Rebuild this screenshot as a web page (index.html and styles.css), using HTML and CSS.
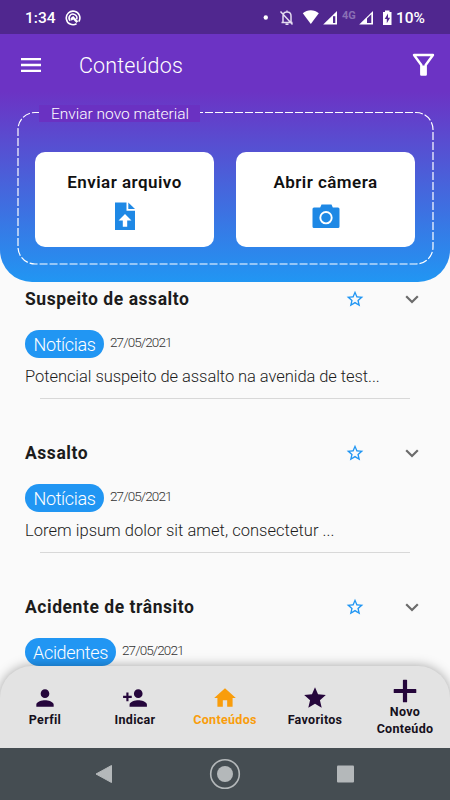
FILE: index.html
```html
<!DOCTYPE html>
<html lang="pt-BR">
<head>
    <meta charset="UTF-8">
    <meta name="viewport" content="width=device-width, initial-scale=1.0">
    <title>Conteúdos</title>
    <link rel="stylesheet" href="styles.css">
</head>
<body>
    <div class="status-bar">
        <span class="time">1:34</span>
        <svg class="app-icon" width="16" height="16" viewBox="0 0 16 16">
            <path d="M11.500 13.800A6.800 6.800 0 1 1 13.800 11.600" fill="none" stroke="#fff" stroke-width="1.600"/>
            <path d="M5.200 10.800A3.900 3.900 0 1 1 11.700 9.200" fill="none" stroke="#fff" stroke-width="1.500"/>
            <path d="M5.500 8.200L8.200 6l5 5.200-1.700 1.800-3.300-3.400-1.700 1.200z" fill="#fff"/>
        </svg>
        <svg class="status-icons" width="132" height="18" viewBox="262 8 132 18">
            <circle cx="265.800" cy="16.500" r="2.200" fill="#fff"/>
            <path d="M281.500 21.500h11M283 21v-6c0-2.500 1.500-4 4-4s4 1.500 4 4v6M287 9.500v2M285.500 23.200h3M280.500 10.500l12 13" fill="none" stroke="#e4dcf0" stroke-width="1.500"/>
            <path d="M302.800 12.200c4.500-4 11.500-4 16 0L310.800 23z" fill="#fff"/>
            <path d="M323.200 23.500L337 10v13.500z" fill="#fff"/>
            <path d="M333 15.200h2.300v6.800H333z" fill="#50278f"/>
            <text class="network" x="342" y="18">4G</text>
            <path d="M359.200 23.500L373 10v13.500z" fill="#fff"/>
            <path d="M367 17.500l4.300-4.200v8.700H367z" fill="#50278f"/>
            <path d="M385 9.500h4.500v1.500h2v13h-8.500V11h2z" fill="#fff"/>
            <path d="M388 12.500l-3.300 5.600h2.100v4.200l3.300-5.600H388z" fill="#50278f"/>
        </svg>
        <span class="battery">10%</span>
    </div>

    <header>
        <div class="toolbar">
            <svg width="20" height="14" viewBox="0 0 20 14">
                <path d="M0 1.200h20M0 7h20M0 12.800h20" stroke="#fff" stroke-width="2.300"/>
            </svg>
            <h1>Conteúdos</h1>
            <svg class="filter" width="23" height="24" viewBox="0 0 23 24">
                <path d="M2 2h19l-7.300 10v9.500H9.300V12z" fill="none" stroke="#fff" stroke-width="2.400" stroke-linejoin="round"/>
                <path d="M9.300 12.500h4.400v9H9.300z" fill="#fff"/>
            </svg>
        </div>
        <div class="upload">
            <svg class="dashes" width="418" height="155" viewBox="0 0 418 155">
                <rect x="1" y="1.500" width="415" height="151.500" rx="17" fill="none" stroke="#fff" stroke-width="1.200" stroke-dasharray="8 2"/>
            </svg>
            <span class="legend">Enviar novo material</span>
            <div class="cards">
                <div class="card">
                    <span class="send">Enviar arquivo</span>
                    <svg width="22" height="28" viewBox="0 0 22 28">
                        <path d="M1 .5h11.500v8.300H21V28H1z" fill="#1e88e5"/>
                        <path d="M14.300.5l6.700 6.600h-6.700z" fill="#1e88e5"/>
                        <path d="M11 12l6.500 6.500h-4.300v6.200H8.800v-6.200H4.500z" fill="#fff"/>
                    </svg>
                </div>
                <div class="card">
                    <span class="camera">Abrir câmera</span>
                    <svg width="28" height="28" viewBox="0 0 28 28">
                        <path d="M2 5.500h6.200L9.500 2.500h10l1.300 3H26a1.500 1.500 0 0 1 1.500 1.500v17.500a1.500 1.500 0 0 1-1.500 1.500H2A1.500 1.500 0 0 1 .5 24.500V7A1.500 1.500 0 0 1 2 5.500z" fill="#1e88e5"/>
                        <circle cx="14" cy="15.700" r="5.700" fill="none" stroke="#fff" stroke-width="1.900"/>
                    </svg>
                </div>
            </div>
        </div>
    </header>

    <main>
        <article class="item">
            <div class="item-head">
                <h2>Suspeito de assalto</h2>
                <svg class="star" width="20" height="20" viewBox="0 0 24 24"><path d="M22 9.240l-7.190-.620L12 2 9.190 8.630 2 9.240l5.460 4.730L5.820 21 12 17.270 18.180 21l-1.630-7.030L22 9.240zM12 15.400l-3.760 2.270 1-4.280-3.320-2.880 4.380-.380L12 6.100l1.710 4.040 4.380.380-3.320 2.880 1 4.280L12 15.400z"/></svg>
                <svg class="chevron" width="14" height="9" viewBox="0 0 14 9"><path d="M1.200 1.200L7 7l5.800-5.800"/></svg>
            </div>
            <div class="meta">
                <span class="tag">Notícias</span>
                <time>27/05/2021</time>
            </div>
            <p class="tight">Potencial suspeito de assalto na avenida de test...</p>
        </article>
        <article class="item">
            <div class="item-head">
                <h2>Assalto</h2>
                <svg class="star" width="20" height="20" viewBox="0 0 24 24"><path d="M22 9.240l-7.190-.620L12 2 9.190 8.630 2 9.240l5.460 4.730L5.820 21 12 17.270 18.180 21l-1.630-7.030L22 9.240zM12 15.400l-3.760 2.270 1-4.280-3.320-2.880 4.380-.380L12 6.100l1.710 4.040 4.380.380-3.320 2.880 1 4.280L12 15.400z"/></svg>
                <svg class="chevron" width="14" height="9" viewBox="0 0 14 9"><path d="M1.200 1.200L7 7l5.800-5.800"/></svg>
            </div>
            <div class="meta">
                <span class="tag">Notícias</span>
                <time>27/05/2021</time>
            </div>
            <p>Lorem ipsum dolor sit amet, consectetur ...</p>
        </article>
        <article class="item">
            <div class="item-head">
                <h2>Acidente de trânsito</h2>
                <svg class="star" width="20" height="20" viewBox="0 0 24 24"><path d="M22 9.240l-7.190-.620L12 2 9.190 8.630 2 9.240l5.460 4.730L5.820 21 12 17.270 18.180 21l-1.630-7.030L22 9.240zM12 15.400l-3.760 2.270 1-4.280-3.320-2.880 4.380-.380L12 6.100l1.710 4.040 4.380.380-3.320 2.880 1 4.280L12 15.400z"/></svg>
                <svg class="chevron" width="14" height="9" viewBox="0 0 14 9"><path d="M1.200 1.200L7 7l5.800-5.800"/></svg>
            </div>
            <div class="meta">
                <span class="tag wide">Acidentes</span>
                <time>27/05/2021</time>
            </div>
        </article>
    </main>

    <nav class="tabs">
        <div class="tab">
            <svg width="26" height="26" viewBox="0 0 24 24"><path d="M12 12c2.210 0 4-1.790 4-4s-1.790-4-4-4-4 1.790-4 4 1.790 4 4 4zm0 2c-2.670 0-8 1.340-8 4v2h16v-2c0-2.660-5.330-4-8-4z"/></svg>
            <span>Perfil</span>
        </div>
        <div class="tab">
            <svg width="26" height="26" viewBox="0 0 24 24"><path d="M15 12c2.210 0 4-1.790 4-4s-1.790-4-4-4-4 1.790-4 4 1.790 4 4 4zm-9-2V7H4v3H1v2h3v3h2v-3h3v-2H6zm9 4c-2.670 0-8 1.340-8 4v2h16v-2c0-2.660-5.330-4-8-4z"/></svg>
            <span>Indicar</span>
        </div>
        <div class="tab active">
            <svg width="26" height="26" viewBox="0 0 24 24"><path d="M10 20v-6h4v6h5v-8h3L12 3 2 12h3v8z"/></svg>
            <span>Conteúdos</span>
        </div>
        <div class="tab">
            <svg width="26" height="26" viewBox="0 0 24 24"><path d="M12 17.270L18.180 21l-1.640-7.030L22 9.240l-7.190-.610L12 2 9.190 8.630 2 9.240l5.460 4.730L5.820 21z"/></svg>
            <span>Favoritos</span>
        </div>
        <div class="tab new">
            <svg width="24" height="24" viewBox="0 0 24 24"><path d="M10.500.7h3a.6.6 0 0 1 .6.6v8.600h8.600a.6.6 0 0 1 .6.6v3a.6.6 0 0 1-.6.6h-8.600v8.600a.6.6 0 0 1-.6.6h-3a.6.6 0 0 1-.6-.6v-8.600H1.300a.6.6 0 0 1-.6-.6v-3a.6.6 0 0 1 .6-.6h8.600V1.300a.6.6 0 0 1 .6-.6z"/></svg>
            <span>Novo<br>Conteúdo</span>
        </div>
    </nav>

    <footer>
        <svg width="18" height="20" viewBox="0 0 18 20"><path d="M1 10L16.500 1.500v17z" fill="#b4b8ba" stroke="#b4b8ba" stroke-linejoin="round"/></svg>
        <svg width="32" height="32" viewBox="0 0 32 32">
            <circle cx="16" cy="16" r="14.300" fill="none" stroke="#b4b8ba" stroke-width="1.600"/>
            <circle cx="16" cy="16" r="8" fill="#b4b8ba"/>
        </svg>
        <svg width="18" height="18" viewBox="0 0 18 18"><rect x="0" y=".5" width="17" height="17" rx="1" fill="#b4b8ba"/></svg>
    </footer>
</body>
</html>
```
FILE: styles.css
```css
* {
    box-sizing: border-box;
}
body {
    font-family: Roboto, sans-serif;
    margin: 0;
    width: 450px;
    height: 800px;
    overflow: hidden;
    display: flex;
    flex-direction: column;
    background: #fafafa;
    color: #1c1c1c;
}
h1, h2, p {
    margin: 0;
}
svg {
    display: block;
    flex: none;
}
.status-bar {
    flex: none;
    height: 34px;
    background: #50278f;
    color: #fff;
    display: flex;
    align-items: center;
    padding: 1px 0 0 25px;
    font-size: 15.5px;
    font-weight: 500;
}
.time {
    width: 40px;
}
.status-icons {
    margin-left: 181px;
}
.network {
    font-size: 11px;
    font-weight: 700;
    fill: #8a6fb5;
}
.battery {
    margin-left: 2px;
}
header {
    flex: none;
    height: 248px;
    padding: 0 17px;
    background: linear-gradient(#6c33c4 0, #6c33c4 58px, #2196f3 100%);
    border-radius: 0 0 32px 32px;
    color: #fff;
}
.toolbar {
    height: 76px;
    padding: 0 0 14px 4px;
    display: flex;
    align-items: center;
}
h1 {
    margin-left: 38px;
    padding-top: 1px;
    font-size: 21.5px;
    font-weight: 300;
    letter-spacing: 0.150px;
}
.filter {
    margin-left: auto;
    margin-right: -2px;
}
.upload {
    position: relative;
    height: 155px;
}
.dashes {
    position: absolute;
    top: 1px;
    left: 0;
}
.legend {
    position: absolute;
    top: -5px;
    left: 22px;
    width: 161px;
    height: 17px;
    padding-left: 12px;
    background: #6a31c2;
    font-size: 15.5px;
    line-height: 18px;
    font-weight: 300;
    white-space: nowrap;
}
.cards {
    display: flex;
    gap: 22px;
    padding: 42px 18px 0;
}
.card {
    width: 179px;
    height: 95px;
    flex: none;
    border-radius: 10px;
    background: #fff;
    color: #111;
    display: flex;
    flex-direction: column;
    align-items: center;
    gap: 9px;
    padding-top: 20px;
    font-size: 17px;
    line-height: 21px;
    font-weight: 600;
    letter-spacing: 0.450px;
}
main {
    flex: 1;
    overflow: hidden;
}
.item {
    height: 154px;
    padding: 5px 31px 0 25px;
}
.item-head {
    display: flex;
    align-items: center;
    height: 24px;
}
h2 {
    font-size: 17.5px;
    font-weight: 700;
    letter-spacing: 0.550px;
    flex: 1;
}
.star {
    fill: #2196f3;
    margin-right: 40px;
}
.chevron {
    fill: none;
    stroke: #6b6b6b;
    stroke-width: 2.200;
}
.meta {
    display: flex;
    align-items: flex-start;
    gap: 6px;
    margin-top: 19px;
}
.tag {
    width: 79px;
    height: 28px;
    border-radius: 14px;
    background: #2196f3;
    color: #fff;
    font-size: 18px;
    line-height: 29px;
    font-weight: 300;
    letter-spacing: -0.350px;
    text-align: center;
}
.tag.wide {
    width: 91px;
}
time {
    padding-top: 4px;
    font-size: 13.5px;
    line-height: 16px;
    font-weight: 300;
    color: #333;
    letter-spacing: -0.900px;
}
.item p {
    height: 41px;
    margin: 0 9px 0 15px;
    padding-top: 9px;
    border-bottom: 1px solid #d8d8d8;
    font-size: 16.5px;
    line-height: 20px;
    font-weight: 300;
    letter-spacing: 0.030px;
    text-indent: -15px;
    white-space: nowrap;
}
.item .tight {
    letter-spacing: -0.060px;
}
.tabs {
    flex: none;
    position: relative;
    height: 82px;
    background: #e3e3e3;
    border-radius: 32px 32px 0 0;
    box-shadow: 0 0 12px rgba(0, 0, 0, 0.350);
    margin-top: -32px;
    display: flex;
    color: #16101c;
}
.tab {
    width: 90px;
    padding-top: 19px;
    display: flex;
    flex-direction: column;
    align-items: center;
    font-size: 12.5px;
    line-height: 17px;
    font-weight: 700;
    text-align: center;
    letter-spacing: 0.300px;
}
.tab svg {
    fill: #25063b;
}
.active {
    color: #f99d0c;
}
.active svg {
    fill: #f99d0c;
}
.new {
    padding-top: 13px;
}
footer {
    flex: none;
    position: relative;
    height: 52px;
    background: #454d52;
    display: flex;
    align-items: center;
    justify-content: center;
    gap: 96px;
}
```
